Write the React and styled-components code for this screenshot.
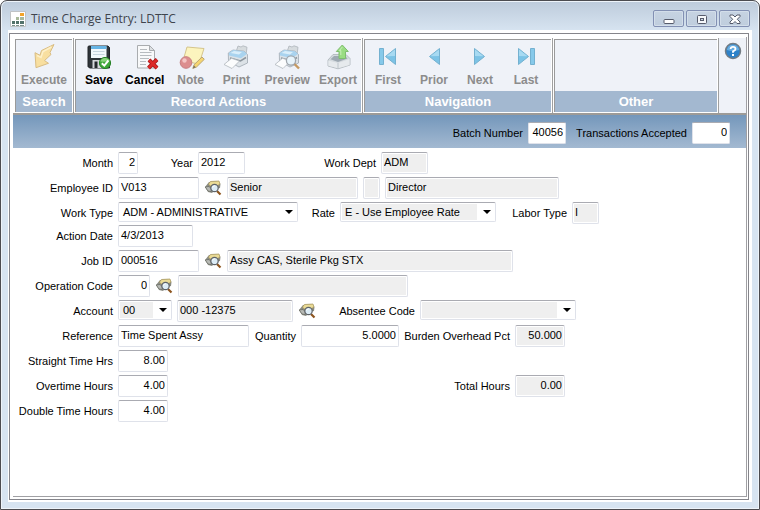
import React from "react";
import styled, { createGlobalStyle, css } from "styled-components";

const GlobalStyle = createGlobalStyle`
  * { box-sizing: border-box; }
  body { margin: 0; background: #fff; }
  body, button, input, select {
    font-family: "Liberation Sans", Arial, sans-serif;
    font-size: 11px;
    color: #000;
  }
`;

const Window = styled.main`
  display: flex;
  flex-direction: column;
  min-height: 100vh;
  padding: 0 7px 7px;
  border: 1px solid #4c4c50;
  border-radius: 7px 7px 0 0;
  background: linear-gradient(#bdcbdb, #d7e4f1 30px);
  box-shadow: inset 0 0 0 1px #eef4fa;
`;

const TitleBar = styled.header`
  display: flex;
  align-items: center;
  gap: 5px;
  height: 29px;
  padding: 6px 2px 0 2px;
`;

const Title = styled.h1`
  flex: 1;
  margin: 0;
  font: 400 12px "Open Sans", "Noto Sans", sans-serif;
  color: #3f444d;
`;

const WindowControls = styled.div`
  display: flex;
  gap: 2px;
`;

const WindowButton = styled.button`
  display: grid;
  place-items: center;
  width: 31px;
  height: 17px;
  padding: 0;
  border: 1px solid #8290b3;
  border-radius: 2px;
  background: linear-gradient(#c6d3e2, #bfcddd);
  box-shadow: inset 0 0 0 1px #d3deea;
`;

const Client = styled.div`
  flex: 1;
  display: flex;
  padding: 3px 3px 2px 1px;
  background: #fff;
`;

const Frame = styled.div`
  flex: 1;
  display: flex;
  min-width: 0;
  padding: 3px 1px 2px 3px;
  border: 1px solid #85858b;
`;

const Page = styled.div`
  flex: 1;
  min-width: 0;
  border: solid #a0a0a4;
  border-width: 0 1px 1px 0;
`;

const Toolbar = styled.div`
  display: grid;
  grid-template-columns: 61px 289px 190px 1fr 27px;
  padding-top: 1px;
  border-bottom: 2px solid #9d9b98;
`;

const GroupCell = styled.div`
  padding: 1px 1px 1px ${(p) => (p.$first ? 2 : 1)}px;
  border-right: 1px solid #a0a0a0;
`;

const Group = styled.section`
  display: flex;
  flex-direction: column;
  height: 73px;
  border: solid #9a9a9a;
  border-width: 1px 0 0 1px;
  background: #eff2f8;
`;

const GroupTools = styled.div`
  flex: 1;
  display: flex;
  justify-content: ${(p) => (p.$centered ? "center" : "flex-start")};
`;

const GroupTitle = styled.h2`
  margin: 0;
  font-size: 13px;
  line-height: 21px;
  text-align: center;
  color: #fff;
  background: #a3b8d0;
`;

const ToolButton = styled.button`
  display: flex;
  flex-direction: column;
  align-items: center;
  gap: 1px;
  width: ${(p) => (p.$wide ? 56 : 46)}px;
  padding: 3px 0 0;
  border: 0;
  background: none;
  font-size: 12px;
  font-weight: 700;
  line-height: 16px;
  color: ${(p) => (p.disabled ? "#8c8c8c" : "#000")};
`;

const HelpPanel = styled.div`
  display: flex;
  justify-content: center;
  padding-top: 4px;
  background: #eff2f8;
`;

const HelpButton = styled.button`
  width: 18px;
  height: 18px;
  padding: 0;
  border: 0;
  background: none;
`;

const BatchBar = styled.div`
  display: flex;
  justify-content: flex-end;
  align-items: center;
  gap: 5px;
  height: 33px;
  padding: 3px 16px 0 0;
  background: linear-gradient(#7497bb, #a3b9d1);
`;

const Form = styled.form`
  display: flex;
  flex-direction: column;
  gap: 3px;
  padding-top: 4px;
`;

const Row = styled.div`
  display: flex;
  gap: 5px;
  height: ${(p) => (p.$short ? 20 : 22)}px;
`;

const Label = styled.label`
  flex: none;
  width: ${(p) => p.$w}px;
  line-height: 23px;
  text-align: right;
  white-space: nowrap;
`;

const boxed = css`
  border: 1px solid #dfe2ea;
  border-top-color: #aaabb2;
  border-radius: 2px;
`;

const Input = styled.input`
  ${boxed}
  flex: none;
  width: ${(p) => p.$w}px;
  height: 22px;
  padding: 0 2px 2px;
  text-align: ${(p) => (p.$num ? "right" : "left")};
  background: ${(p) => (p.readOnly ? "#efefef" : "#fff")};
  box-shadow: inset 0 0 0 1px #fff;
  outline: none;
`;

const SelectBox = styled.div`
  position: relative;
  flex: none;
  width: ${(p) => p.$w}px;
  height: 20px;
  &::after {
    content: "";
    position: absolute;
    right: 5px;
    top: 8px;
    border: 4px solid transparent;
    border-top: 4px solid #000;
    border-bottom: 0;
    pointer-events: none;
  }
`;

const Select = styled.select`
  ${boxed}
  appearance: none;
  width: 100%;
  height: 20px;
  padding: 1px 18px 1px 1px;
  outline: none;
  text-indent: 3px;
  background-color: ${(p) => (p.$shaded ? "#efefef" : "#fff")};
  background-clip: content-box;
`;

const LookupButton = styled.button`
  flex: none;
  width: 18px;
  height: 22px;
  padding: 0;
  border: 0;
  background: none;
`;

const Icon = styled.svg`
  display: block;
  flex: none;
`;

const ToolIcon = ({ children }) => (
  <Icon width="28" height="28" viewBox="0 0 28 28" aria-hidden="true">{children}</Icon>
);

const ExecuteIcon = () => (
  <ToolIcon>
    <path d="M24 1.5L11.5 7.5L10 12.3L5 9.7L6 24.7L18.5 20.3L14.5 17.6L21 11.5L20 9.5Z" fill="#f8dfa0" stroke="#d9bd84" strokeLinejoin="round" />
    <path d="M21.5 4L13 8.5L11 14.5L7 12.5" fill="none" stroke="#fdf0ca" strokeWidth="1.5" />
  </ToolIcon>
);

const SaveIcon = () => (
  <ToolIcon>
    <path d="M4 3H23L24.5 4.5V25H4.5L3 23.5V4Q3 3 4 3Z" fill="#2f3439" stroke="#202428" />
    <path d="M6 3.5H21.5V15H6Z" fill="#f3f8fc" />
    <path d="M6 3H21.5V6H6Z" fill="#67b5e5" />
    <path d="M8 8.5H19.5M8 11.5H19.5" stroke="#c7d5df" />
    <path d="M7.5 17H18V25H7.5Z" fill="#d5d8dc" />
    <path d="M9.5 18.5H12.5V25H9.5Z" fill="#24282d" />
    <circle cx="20" cy="20" r="5.6" fill="#40a83a" stroke="#278226" />
    <path d="M15.3 18.5A5 5 0 0 1 24.7 18Q20 19 15.3 18.5Z" fill="#8bd57d" />
    <path d="M16.8 20.2L19.3 22.6L23.4 17.5" fill="none" stroke="#fff" strokeWidth="2" />
  </ToolIcon>
);

const CancelIcon = () => (
  <ToolIcon>
    <path d="M6.5 2.5H18.5L23.5 7.5V25H6.5Z" fill="#f8f9fa" stroke="#a9acaf" />
    <path d="M18.5 2.5V7.5H23.5Z" fill="#dce0e3" stroke="#a9acaf" />
    <path d="M9 6.5H16M9 9.5H20.5M9 12.5H20.5M9 15.5H18M9 18.5H15M9 21.5H15" stroke="#b7bbbf" />
    <path d="M18 17L26 25M26 16.5L17.5 25" stroke="#9f1515" strokeWidth="4" />
    <path d="M18 17L26 25M26 16.5L17.5 25" stroke="#dc2828" strokeWidth="2.6" />
  </ToolIcon>
);

const NoteIcon = () => (
  <ToolIcon>
    <path d="M10 4L27 5.5L22 21L6 18Z" fill="#fcf4be" stroke="#d5c58c" />
    <path d="M22 21L23 17L26 16Z" fill="#e4cf86" />
    <circle cx="9" cy="19.5" r="5.8" fill="#dc8e8f" stroke="#c77d80" />
    <circle cx="7.5" cy="17.5" r="2.2" fill="#f4c6c5" />
    <path d="M25 14L27.3 16.3L19.5 24L15.8 25.4L17 21.8Z" fill="#f6d56f" stroke="#bba674" />
    <path d="M15.8 25.4L17 22.5L18.7 24.2Z" fill="#756d61" />
  </ToolIcon>
);

const PrinterShape = () => (
  <>
    <path d="M14 9L16 3L19 4L21 2.8L25 4.2L24 12L15 12Z" fill="#d7dcdf" stroke="#adb4ba" strokeWidth="0.8" />
    <path d="M6.3 10L11 7L22 8.2L25.5 11.5V20L17 24L6.5 18.5Z" fill="#dce2e7" stroke="#9fa8b1" strokeWidth="0.8" />
    <path d="M6.8 10L11 7L22 8.2L25 11L19 15.3L7 12.5Z" fill="#a9d3ef" />
    <path d="M8.5 10L12 8L20 9L17 11.5Z" fill="#daeefa" />
    <path d="M8 15L18.5 18L24 14.5" fill="none" stroke="#8d969e" strokeWidth="1.5" />
    <path d="M2 21.5L9.5 15.3L17.5 18L10 25.5Z" fill="#fbfcfd" stroke="#b0b6bc" strokeWidth="0.8" />
  </>
);

const PrintIcon = () => <ToolIcon><PrinterShape /></ToolIcon>;

const PreviewIcon = () => (
  <ToolIcon>
    <PrinterShape />
    <path d="M21 20.5L26 25.5" stroke="#c69a62" strokeWidth="2.4" />
    <circle cx="18" cy="17.5" r="4.6" fill="#e8f4fb" stroke="#a0a7ae" strokeWidth="1.3" />
  </ToolIcon>
);

const ExportIcon = () => (
  <ToolIcon>
    <path d="M4 17L9 11.5H22L26 15.5V22L14 25.8L4 23Z" fill="#d4dade" stroke="#abb2b8" strokeWidth="0.8" />
    <path d="M6.5 16.3L10 13H21L23.5 15.5L14 19Z" fill="#9ea9b2" />
    <path d="M4.3 17.5L14 20L25.6 16V22L14 25.3L4.3 22.7Z" fill="#e6eaed" />
    <path d="M14 20V25.3" stroke="#bcc4ca" />
    <path d="M18.3 2L24.3 8.5H21.5V15.5H15V8.5H12.3Z" fill="#9add83" stroke="#7fbd70" strokeLinejoin="round" />
    <path d="M18.3 4L15.5 7.5H16.8V12" fill="none" stroke="#c8efb9" />
  </ToolIcon>
);

const TriangleIcon = ({ flip, bar }) => (
  <ToolIcon>
    <g transform={flip ? "matrix(-1 0 0 1 28 0)" : undefined}>
      {bar && <path d="M5.5 5.5H9.5V21.5H5.5Z" fill="#86c9ea" stroke="#74b1d0" />}
      <g transform={bar ? "translate(2 0)" : undefined}>
        <path d="M19.5 5.5V21.5L9.5 13.5Z" fill="#7cc3e6" stroke="#74b1d0" />
        <path d="M19 6.5V13L10.5 13.3Z" fill="#a7daf2" />
      </g>
    </g>
  </ToolIcon>
);

const AppIcon = () => (
  <Icon width="16" height="16" viewBox="0 0 16 16" aria-hidden="true">
    <path d="M0.5 0.5H15.5V15.5H0.5Z" fill="#fff" stroke="#c0c3c5" />
    <path d="M10 2H14V5H10Z" fill="#f2a32a" />
    <path d="M6 6H9V9H6ZM10 6H14V9H10Z" fill="#a9b99b" />
    <path d="M2 10H5V13H2ZM6 10H9V13H6ZM10 10H14V13H10Z" fill="#52736b" />
    <path d="M2 14H5V15H2ZM6 14H9V15H6ZM10 14H14V15H10Z" fill="#7b928d" />
  </Icon>
);

const HelpIcon = () => (
  <Icon width="18" height="18" viewBox="0 0 18 18" aria-hidden="true">
    <circle cx="9" cy="9" r="7.5" fill="#2d82c9" stroke="#737c84" strokeWidth="1.5" />
    <path d="M2.8 8A6.3 6.3 0 0 1 15.2 8Q9 10 2.8 8Z" fill="#65ace1" />
    <path d="M6.6 7Q6.7 4.8 9 4.8Q11.5 4.8 11.5 6.9Q11.5 8.2 9 9.4V10.7" fill="none" stroke="#fff" strokeWidth="1.8" />
    <path d="M8 12H10V14H8Z" fill="#fff" />
  </Icon>
);

const LookupIcon = () => (
  <Icon width="18" height="16" viewBox="0 0 18 16" aria-hidden="true">
    <path d="M1 7L5 2L13.5 1L16.5 4L16 8L12 9L8 13L4 12Z" fill="#8a8b82" />
    <path d="M4.5 4L6.5 1.5L15 1L16 4L13 6L6 6Z" fill="#eadb96" stroke="#a29157" strokeWidth="0.7" />
    <path d="M1.2 7L5 6.5L7.5 9L7 11.5L4 11Z" fill="#b8bab5" stroke="#64675f" strokeWidth="0.7" />
    <path d="M13 11L16.5 14.5" stroke="#8d551f" strokeWidth="2.2" />
    <circle cx="10.5" cy="8" r="3.7" fill="#dcecf6" stroke="#5e6368" strokeWidth="1.2" />
    <path d="M8.5 7.5Q9 6 10.7 5.8" fill="none" stroke="#fff" />
  </Icon>
);

const MinimizeIcon = () => (
  <Icon width="12" height="12" viewBox="0 0 12 12" aria-hidden="true">
    <rect x="1" y="6.5" width="10" height="4" rx="1" fill="#fff" stroke="#565b6b" />
  </Icon>
);

const MaximizeIcon = () => (
  <Icon width="12" height="12" viewBox="0 0 12 12" aria-hidden="true">
    <rect x="1.5" y="2.5" width="9" height="8" rx="1" fill="#f5f7fa" stroke="#565b6b" />
    <rect x="4.5" y="5.5" width="3" height="2" fill="#cbd6e3" stroke="#565b6b" />
  </Icon>
);

const CloseIcon = () => (
  <Icon width="12" height="12" viewBox="0 0 12 12" aria-hidden="true">
    <path d="M1 2H4L6 4L8 2H11V3.5L8.3 6.3L11 9V10.5H8L6 8.5L4 10.5H1V9L3.7 6.3L1 3.5Z" fill="#fff" stroke="#565b6b" />
  </Icon>
);

const toolGroups = [
  { title: "Search", tools: [{ name: "Execute", icon: <ExecuteIcon />, disabled: true, wide: true }], centered: true },
  {
    title: "Record Actions",
    tools: [
      { name: "Save", icon: <SaveIcon /> },
      { name: "Cancel", icon: <CancelIcon /> },
      { name: "Note", icon: <NoteIcon />, disabled: true },
      { name: "Print", icon: <PrintIcon />, disabled: true },
      { name: "Preview", icon: <PreviewIcon />, disabled: true, wide: true },
      { name: "Export", icon: <ExportIcon />, disabled: true },
    ],
    centered: true,
  },
  {
    title: "Navigation",
    tools: [
      { name: "First", icon: <TriangleIcon bar />, disabled: true },
      { name: "Prior", icon: <TriangleIcon />, disabled: true },
      { name: "Next", icon: <TriangleIcon flip />, disabled: true },
      { name: "Last", icon: <TriangleIcon flip bar />, disabled: true },
    ],
  },
  { title: "Other", tools: [] },
];

const Field = ({ id, label, lw, value, ...rest }) => (
  <>
    <Label htmlFor={id} $w={lw}>{label}</Label>
    <Input id={id} defaultValue={value} {...rest} />
  </>
);

const SelectField = ({ id, label, lw, w, value, shaded }) => (
  <>
    <Label htmlFor={id} $w={lw}>{label}</Label>
    <SelectBox $w={w}>
      <Select id={id} $shaded={shaded}>
        <option>{value}</option>
      </Select>
    </SelectBox>
  </>
);

const Lookup = ({ name }) => (
  <LookupButton type="button" aria-label={`Look up ${name}`}><LookupIcon /></LookupButton>
);

export default function App() {
  return (
    <>
      <GlobalStyle />
      <Window>
        <TitleBar>
          <AppIcon />
          <Title>Time Charge Entry: LDTTC</Title>
          <WindowControls>
            <WindowButton aria-label="Minimize"><MinimizeIcon /></WindowButton>
            <WindowButton aria-label="Maximize"><MaximizeIcon /></WindowButton>
            <WindowButton aria-label="Close"><CloseIcon /></WindowButton>
          </WindowControls>
        </TitleBar>
        <Client>
          <Frame>
            <Page>
              <Toolbar>
                {toolGroups.map((group, i) => (
                  <GroupCell key={group.title} $first={i === 0}>
                    <Group>
                      <GroupTools $centered={group.centered}>
                        {group.tools.map((tool) => (
                          <ToolButton key={tool.name} disabled={tool.disabled} $wide={tool.wide}>
                            {tool.icon}
                            {tool.name}
                          </ToolButton>
                        ))}
                      </GroupTools>
                      <GroupTitle>{group.title}</GroupTitle>
                    </Group>
                  </GroupCell>
                ))}
                <HelpPanel>
                  <HelpButton aria-label="Help"><HelpIcon /></HelpButton>
                </HelpPanel>
              </Toolbar>
              <BatchBar>
                <Field id="batch" label="Batch Number" lw={72} value="40056" $w={38} $num />
                <Field id="accepted" label="Transactions Accepted" lw={116} value="0" $w={38} $num />
              </BatchBar>
              <Form>
                <Row>
                  <Field id="month" label="Month" lw={100} value="2" $w={20} $num />
                  <Field id="year" label="Year" lw={50} value="2012" $w={47} />
                  <Field id="dept" label="Work Dept" lw={126} value="ADM" $w={47} readOnly />
                </Row>
                <Row>
                  <Field id="employee" label="Employee ID" lw={100} value="V013" $w={81} />
                  <Lookup name="employee" />
                  <Input aria-label="Last name" defaultValue="Senior" $w={131} readOnly />
                  <Input aria-label="Middle initial" $w={17} readOnly />
                  <Input aria-label="First name" defaultValue="Director" $w={174} readOnly />
                </Row>
                <Row $short>
                  <SelectField id="worktype" label="Work Type" lw={100} w={180} value="ADM - ADMINISTRATIVE" />
                  <SelectField id="rate" label="Rate" lw={32} w={156} value="E - Use Employee Rate" shaded />
                  <Field id="labor" label="Labor Type" lw={66} value="I" $w={27} readOnly />
                </Row>
                <Row>
                  <Field id="date" label="Action Date" lw={100} value="4/3/2013" $w={75} />
                </Row>
                <Row>
                  <Field id="job" label="Job ID" lw={100} value="000516" $w={81} />
                  <Lookup name="job" />
                  <Input aria-label="Job description" defaultValue="Assy CAS, Sterile Pkg STX" $w={286} readOnly />
                </Row>
                <Row>
                  <Field id="operation" label="Operation Code" lw={100} value="0" $w={32} $num />
                  <Lookup name="operation" />
                  <Input aria-label="Operation description" $w={230} readOnly />
                </Row>
                <Row>
                  <SelectField id="account" label="Account" lw={100} w={54} value="00" shaded />
                  <Input aria-label="Account number" defaultValue="000 -12375" $w={116} readOnly />
                  <Lookup name="account" />
                  <SelectField id="absentee" label="Absentee Code" lw={94} w={156} value="" shaded />
                </Row>
                <Row>
                  <Field id="reference" label="Reference" lw={100} value="Time Spent Assy" $w={131} />
                  <Field id="quantity" label="Quantity" lw={42} value="5.0000" $w={98} $num />
                  <Field id="burden" label="Burden Overhead Pct" lw={106} value="50.000" $w={50} $num readOnly />
                </Row>
                <Row>
                  <Field id="straight" label="Straight Time Hrs" lw={100} value="8.00" $w={50} $num />
                </Row>
                <Row>
                  <Field id="overtime" label="Overtime Hours" lw={100} value="4.00" $w={50} $num />
                  <Field id="total" label="Total Hours" lw={337} value="0.00" $w={50} $num readOnly />
                </Row>
                <Row>
                  <Field id="double" label="Double Time Hours" lw={100} value="4.00" $w={50} $num />
                </Row>
              </Form>
            </Page>
          </Frame>
        </Client>
      </Window>
    </>
  );
}
